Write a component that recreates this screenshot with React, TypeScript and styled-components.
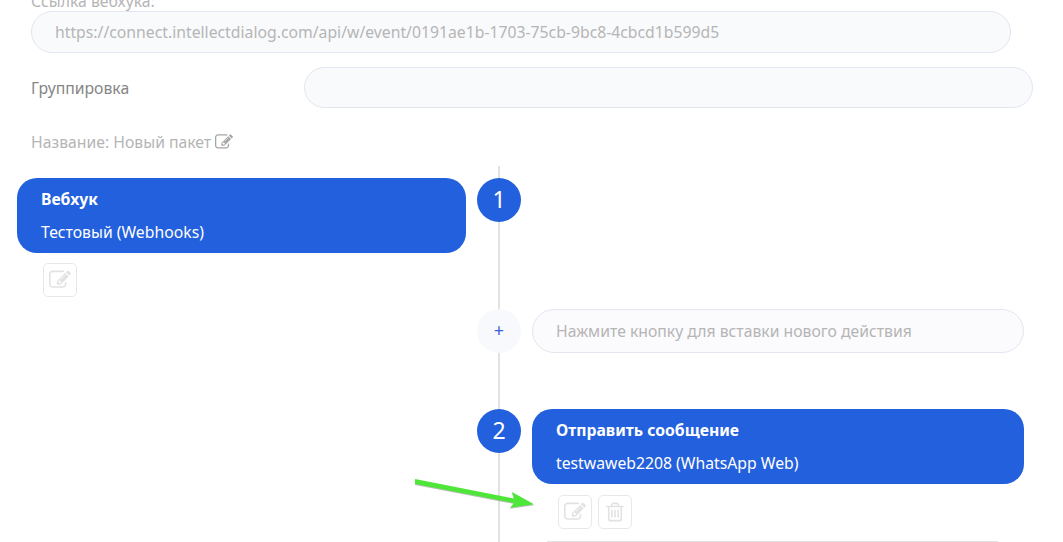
import styled, { createGlobalStyle } from "styled-components";

const GlobalStyle = createGlobalStyle`
  html, body {
    margin: 0;
    background: #ffffff;
  }
`;

const EditIcon = () => (
  <svg viewBox="0 0 1792 1792" fill="currentColor">
    <path d="M888 1184l116-116-152-152-116 116v56h96v96h56zm440-720q-16-16-33 1l-350 350q-17 17-1 33t33-1l350-350q17-17 1-33zm80 594v190q0 119-84.5 203.5t-203.5 84.5h-832q-119 0-203.5-84.5t-84.5-203.5v-832q0-119 84.5-203.5t203.5-84.5h832q63 0 117 25 15 7 18 23 3 17-9 29l-49 49q-14 14-32 8-23-6-45-6h-832q-66 0-113 47t-47 113v832q0 66 47 113t113 47h832q66 0 113-47t47-113v-126q0-13 9-22l64-64q15-15 35-7t20 29zm-96-738l288 288-672 672h-288v-288zm444 132l-92 92-288-288 92-92q28-28 68-28t68 28l152 152q28 28 28 68t-28 68z" />
  </svg>
);

const TrashIcon = () => (
  <svg viewBox="0 0 1792 1792" fill="currentColor">
    <path d="M704 736v576q0 14-9 23t-23 9h-64q-14 0-23-9t-9-23v-576q0-14 9-23t23-9h64q14 0 23 9t9 23zm256 0v576q0 14-9 23t-23 9h-64q-14 0-23-9t-9-23v-576q0-14 9-23t23-9h64q14 0 23 9t9 23zm256 0v576q0 14-9 23t-23 9h-64q-14 0-23-9t-9-23v-576q0-14 9-23t23-9h64q14 0 23 9t9 23zm128 724v-948h-896v948q0 22 7 40.5t14.5 27 10.5 8.5h832q3 0 10.5-8.5t14.5-27 7-40.5zm-672-1076h448l-48-117q-7-9-17-11h-317q-10 2-17 11zm928 32v64q0 14-9 23t-23 9h-96v948q0 83-47 143.5t-113 60.5h-832q-66 0-113-58.5t-47-141.5v-952h-96q-14 0-23-9t-9-23v-64q0-14 9-23t23-9h309l70-167q15-37 54-63t79-26h320q40 0 79 26t54 63l70 167h309q14 0 23 9t9 23z" />
  </svg>
);

const ToolButtons = ({ withDelete }: { withDelete?: boolean }) => (
  <Tools>
    <ToolButton>
      <EditIcon />
    </ToolButton>
    {withDelete && (
      <ToolButton>
        <TrashIcon />
      </ToolButton>
    )}
  </Tools>
);

export default function App() {
  return (
    <Page>
      <GlobalStyle />
      <Form>
        <UrlField>
          <MutedLabel>Ссылка вебхука:</MutedLabel>
          <UrlInput>
            https://connect.intellectdialog.com/api/w/event/0191ae1b-1703-75cb-9bc8-4cbcd1b599d5
          </UrlInput>
        </UrlField>
        <GroupRow>
          <GroupLabel>Группировка</GroupLabel>
          <GroupInput />
        </GroupRow>
        <PackageName>
          Название: Новый пакет <EditIcon />
        </PackageName>
      </Form>
      <Timeline>
        <Card>
          <CardTitle>Вебхук</CardTitle>
          <CardText>Тестовый (Webhooks)</CardText>
        </Card>
        <StepCircle>1</StepCircle>
        <span />

        <LeftTools>
          <ToolButtons />
        </LeftTools>
        <span />
        <span />

        <span />
        <AddCircle>+</AddCircle>
        <InsertHint>Нажмите кнопку для вставки нового действия</InsertHint>

        <Spacer />

        <span />
        <StepCircle>2</StepCircle>
        <Card>
          <CardTitle>Отправить сообщение</CardTitle>
          <CardText>testwaweb2208 (WhatsApp Web)</CardText>
        </Card>

        <span />
        <span />
        <RightTools>
          <ToolButtons withDelete />
          <NextCardEdge />
        </RightTools>
      </Timeline>
      <Arrow viewBox="0 0 130 40" width="130" height="40">
        <path d="M1 4 L100 23.5 L98 17 L120 29.3 L96 32.7 L100 28 L1 9 Z" fill="#6f7f6d" opacity="0.5" />
        <path d="M1 3 L100 22.5 L98 16 L120 28.3 L96 31.7 L100 27 L1 8 Z" fill="#4fe63a" />
      </Arrow>
    </Page>
  );
}

const Page = styled.div`
  position: relative;
  width: 1063px;
  height: 542px;
  overflow: hidden;
  font-family: "Noto Sans", "Open Sans", sans-serif;
  font-size: 15.75px;
`;

const Form = styled.div`
  display: flex;
  flex-direction: column;
  padding-left: 31px;
  margin-top: -9px;
`;

const UrlField = styled.div`
  display: flex;
  flex-direction: column;
`;

const MutedLabel = styled.div`
  height: 20px;
  line-height: 20px;
  color: #b5b5b5;
`;

const UrlInput = styled.div`
  box-sizing: border-box;
  width: 980px;
  height: 42px;
  padding: 0 23px;
  line-height: 40px;
  border: 1px solid #e4e6ef;
  border-radius: 21px;
  background: #f9fafc;
  color: #b5b5b5;
`;

const GroupRow = styled.div`
  display: flex;
  align-items: center;
  margin-top: 14px;
`;

const GroupLabel = styled.div`
  width: 273px;
  color: #868686;
`;

const GroupInput = styled.div`
  box-sizing: border-box;
  width: 729px;
  height: 41px;
  border: 1px solid #e4e6ef;
  border-radius: 21px;
  background: #f9fafc;
`;

const PackageName = styled.div`
  height: 20px;
  line-height: 20px;
  margin-top: 24px;
  color: #b5b5b5;

  svg {
    width: 18px;
    height: 18px;
    vertical-align: -3px;
    color: #a5a5a5;
  }
`;

const Timeline = styled.div`
  position: relative;
  box-sizing: border-box;
  display: grid;
  grid-template-columns: 449px 44px 492px;
  column-gap: 11px;
  align-items: start;
  margin-top: 14px;
  padding: 12px 0 0 17px;
  height: 376px;

  &::before {
    content: "";
    position: absolute;
    left: 498px;
    top: 0;
    bottom: 0;
    width: 2px;
    background: #e2e2e2;
  }
`;

const Card = styled.div`
  box-sizing: border-box;
  height: 75px;
  padding: 9px 24px;
  border-radius: 20px;
  background: #2360dd;
  color: #ffffff;
`;

const CardTitle = styled.div`
  height: 24px;
  line-height: 24px;
  font-weight: 700;
`;

const CardText = styled.div`
  height: 24px;
  line-height: 24px;
  margin-top: 9px;
`;

const StepCircle = styled.div`
  position: relative;
  width: 44px;
  height: 44px;
  border-radius: 50%;
  background: #2360dd;
  color: #ffffff;
  font-size: 23px;
  line-height: 43px;
  text-align: center;
`;

const AddCircle = styled.div`
  position: relative;
  width: 44px;
  height: 44px;
  border-radius: 50%;
  background: #f8f9fc;
  color: #3a62d8;
  font-size: 18px;
  line-height: 43px;
  text-align: center;
`;

const InsertHint = styled.div`
  box-sizing: border-box;
  height: 44px;
  padding: 0 23px;
  line-height: 42px;
  border: 1px solid #e4e6ef;
  border-radius: 22px;
  background: #fbfbfd;
  color: #b5b5b5;
`;

const Spacer = styled.div`
  grid-column: 1 / -1;
  height: 56px;
`;

const Tools = styled.div`
  display: flex;
  gap: 6px;
`;

const ToolButton = styled.div`
  box-sizing: border-box;
  display: flex;
  align-items: center;
  justify-content: center;
  width: 34px;
  height: 34px;
  border: 1px solid #e8e8e8;
  border-radius: 5px;
  background: #ffffff;
  color: #e2e2e2;

  svg {
    width: 22px;
    height: 22px;
  }
`;

const LeftTools = styled.div`
  box-sizing: border-box;
  height: 56px;
  padding: 10px 0 0 26px;
`;

const RightTools = styled.div`
  padding: 11px 0 0 26px;
`;

const NextCardEdge = styled.div`
  width: 451px;
  height: 1px;
  margin: 12px 0 0 -11px;
  background: #e2e2e2;
`;

const Arrow = styled.svg`
  position: absolute;
  left: 414px;
  top: 476px;
`;
